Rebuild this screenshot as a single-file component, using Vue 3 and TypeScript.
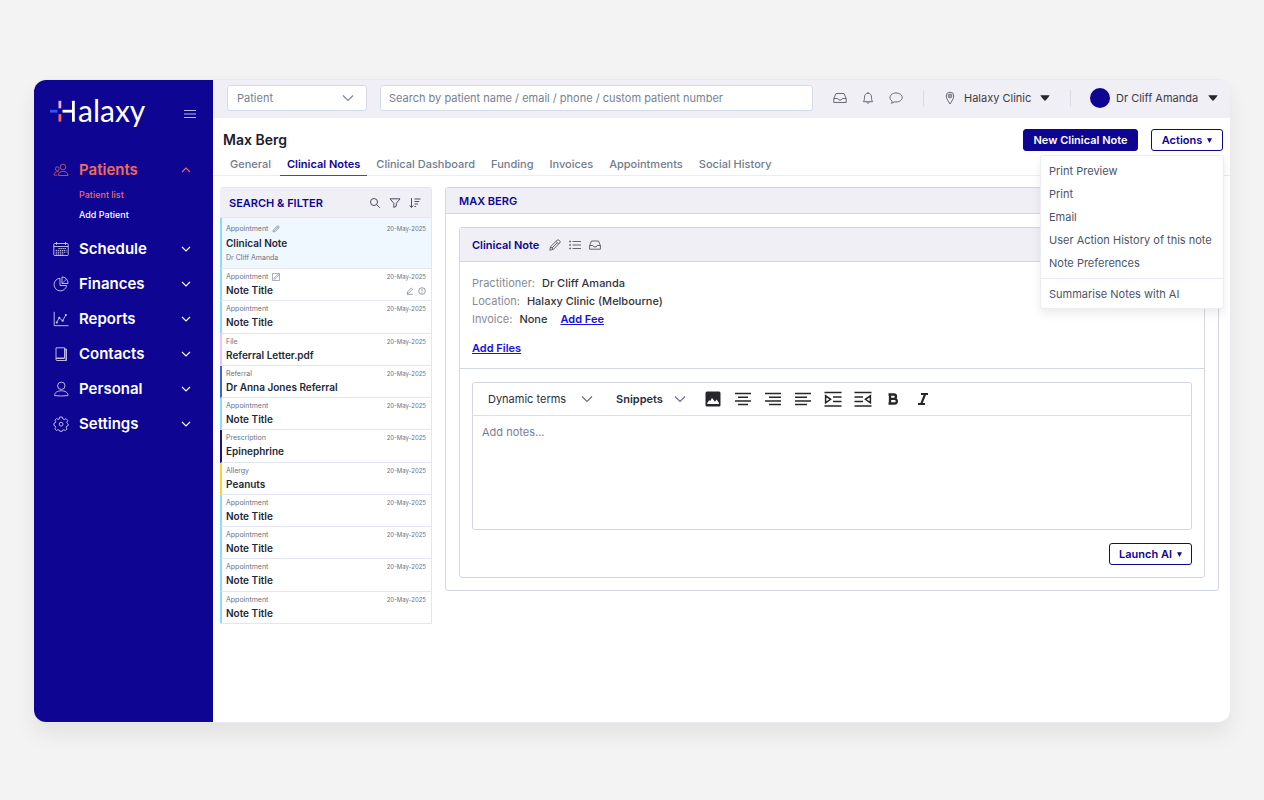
<script setup lang="ts">
import { ref } from 'vue'

interface NavItem { label: string; icon: string; open?: boolean }
interface Entry { kind: string; title: string; tone: string; author?: string; mark?: 'pencil' | 'edit'; flags?: boolean }

const nav: NavItem[] = [
  { label: 'Patients', icon: 'patients', open: true },
  { label: 'Schedule', icon: 'schedule' },
  { label: 'Finances', icon: 'finances' },
  { label: 'Reports', icon: 'reports' },
  { label: 'Contacts', icon: 'contacts' },
  { label: 'Personal', icon: 'personal' },
  { label: 'Settings', icon: 'settings' },
]

const tabs = ['General', 'Clinical Notes', 'Clinical Dashboard', 'Funding', 'Invoices', 'Appointments', 'Social History']
const activeTab = ref('Clinical Notes')

const entries: Entry[] = [
  { kind: 'Appointment', title: 'Clinical Note', tone: 'sky', author: 'Dr Cliff Amanda', mark: 'pencil' },
  { kind: 'Appointment', title: 'Note Title', tone: 'sky', mark: 'edit', flags: true },
  { kind: 'Appointment', title: 'Note Title', tone: 'sky' },
  { kind: 'File', title: 'Referral Letter.pdf', tone: 'pink' },
  { kind: 'Referral', title: 'Dr Anna Jones Referral', tone: 'blue' },
  { kind: 'Appointment', title: 'Note Title', tone: 'sky' },
  { kind: 'Prescription', title: 'Epinephrine', tone: 'navy' },
  { kind: 'Allergy', title: 'Peanuts', tone: 'yellow' },
  { kind: 'Appointment', title: 'Note Title', tone: 'sky' },
  { kind: 'Appointment', title: 'Note Title', tone: 'sky' },
  { kind: 'Appointment', title: 'Note Title', tone: 'sky' },
  { kind: 'Appointment', title: 'Note Title', tone: 'sky' },
]

const actions = ['Print Preview', 'Print', 'Email', 'User Action History of this note', 'Note Preferences']
const menuOpen = ref(true)
const notes = ref('')

const tools = [
  { name: 'Insert image', icon: 'image' },
  { name: 'Align centre', icon: 'M1 3.5H17M4 7.3H14M1 10.9H17M4 14.6H14' },
  { name: 'Align right', icon: 'M1 3.5H17M5 7.3H17M1 10.9H17M5 14.6H17' },
  { name: 'Align left', icon: 'M1 3.5H17M1 7.3H13M1 10.9H17M1 14.6H13' },
  { name: 'Increase indent', icon: 'M.5 2.5H17.5M9 7H17.5M9 11.5H17.5M.5 16H17.5M1.6 5.8V12.8L6.6 9.3Z' },
  { name: 'Decrease indent', icon: 'M.5 2.5H17.5M.5 7H9M.5 11.5H9M.5 16H17.5M16.4 5.8V12.8L11.4 9.3Z' },
  { name: 'Bold', icon: 'bold' },
  { name: 'Italic', icon: 'italic' },
]
</script>

<template>
  <div class="page">
    <div class="window">
      <aside class="sidebar">
        <div class="brand">
          <a class="logo" href="#" aria-label="Halaxy">
            <svg class="mark" width="28" height="23" viewBox="0 0 28 23">
              <rect x="8.5" y="1.8" width="2.8" height="7.5" fill="#e3b5f2" />
              <rect x="0" y="10.8" width="7.5" height="2.8" fill="#2e55ff" />
              <rect x="8.5" y="15.2" width="2.8" height="7.4" fill="#f06a5e" />
              <rect x="12.5" y="10.8" width="10" height="2.8" fill="#fff" />
              <rect x="22" y="1.8" width="2.8" height="21" rx=".5" fill="#fff" />
            </svg>
            <span class="word">alaxy</span>
          </a>
          <button class="burger" aria-label="Toggle menu">
            <svg width="12" height="10" viewBox="0 0 12 10"><path d="M0 1.5H12M0 5H12M0 8.5H12" stroke="#b9b6e4" stroke-width="1.1" /></svg>
          </button>
        </div>

        <nav class="nav">
          <template v-for="item in nav" :key="item.label">
            <button class="nav-item" :class="{ open: item.open }">
              <svg class="nav-icon" width="16" height="16" viewBox="0 0 16 16" fill="none" stroke="currentColor" stroke-width=".9">
                <template v-if="item.icon === 'patients'">
                  <circle cx="10" cy="5" r="2.8" /><path d="M5.5 13.5C5.5 10.8 7.3 9.4 10.1 9.4S15 10.8 15 13.5Z" />
                  <circle cx="4.3" cy="6.8" r="1.9" /><path d="M5.8 9.8C3 9.2 1 10.5 1 13.1H4.4" />
                </template>
                <template v-else-if="item.icon === 'schedule'">
                  <rect x=".8" y="2.5" width="14.4" height="12" rx=".8" /><path d="M.8 5.5H15.2M3.5 1V3.8M12.5 1V3.8" />
                  <path d="M5.5 7.5H13.5M2.7 9.4H13.5M2.7 11.2H13.5M2.7 13H11" stroke-width="1" stroke-dasharray="1.3 .7" />
                </template>
                <template v-else-if="item.icon === 'finances'">
                  <path d="M7 2.3A6.3 6.3 0 1 0 13.6 9.5H7Z" /><path d="M9 .9V7.5H15A6.2 6.2 0 0 0 9 .9Z" /><path d="M9 7.5L13.5 3.2" stroke-width=".7" />
                </template>
                <template v-else-if="item.icon === 'reports'">
                  <path d="M1.2 .8V14.7H15.5" /><path d="M3.7 11.5L6.2 6.8L9.6 9.8L12.8 4" /><path d="M3.7 11.5h.1M6.2 6.8h.1M9.6 9.8h.1M12.8 4h.1" stroke-width="2" stroke-linecap="round" />
                </template>
                <template v-else-if="item.icon === 'contacts'">
                  <path d="M3 1.8H11.5V12H3ZM3 12V13.5Q3 14.5 4 14.5H13.5V3H11.5M3 12.5H11.5" /><path d="M12.6 3V14.4" stroke-width=".6" />
                </template>
                <template v-else-if="item.icon === 'personal'">
                  <circle cx="8.3" cy="4.8" r="3.7" /><path d="M1.6 14.6C1.6 11.3 4.5 9.8 8.3 9.8S15 11.3 15 14.6Q8.3 15.4 1.6 14.6Z" />
                </template>
                <template v-else>
                  <path d="M6.7 1H9.3L9.8 2.9L11.3 3.6L13 2.6L14.8 4.5L13.8 6.1L14.3 7.3L15.2 8V9.5L13.9 10L13.2 11.5L14 13L12.3 14.5L10.9 13.8L9.5 14.2L9.2 15.3H6.8L6.3 14.1L4.9 13.7L3.4 14.5L1.9 12.8L2.7 11.5L2.2 10L.9 9.5V7.5L2.2 6.9L2.7 5.5L1.9 4.2L3.6 2.5L5 3.4L6.3 2.9Z" stroke-linejoin="round" />
                  <circle cx="8.1" cy="8.2" r="1.9" />
                </template>
              </svg>
              <span class="nav-label">{{ item.label }}</span>
              <svg width="10" height="8" viewBox="0 0 10 8" fill="none" stroke="currentColor" stroke-width="1.1">
                <path :d="item.open ? 'M1 6L5 2L9 6' : 'M1 2L5 6L9 2'" />
              </svg>
            </button>
            <div v-if="item.open" class="subnav">
              <a href="#" class="current">Patient list</a>
              <a href="#">Add Patient</a>
            </div>
          </template>
        </nav>
      </aside>

      <main class="main">
        <header class="topbar">
          <div class="select-box scope">
            <select aria-label="Search scope"><option>Patient</option></select>
            <svg width="12" height="8" viewBox="0 0 12 8" fill="none" stroke="#7c8799" stroke-width="1.2"><path d="M1 1.5L6 6.5L11 1.5" /></svg>
          </div>
          <input class="search" type="text" aria-label="Search patients" placeholder="Search by patient name / email / phone / custom patient number" />
          <div class="quick">
            <button aria-label="Inbox"><svg width="14" height="14" viewBox="0 0 14 14" fill="none" stroke="#5c5c66" stroke-width=".9"><path d="M.8 7.5L3 2.5H11L13.2 7.5V11.5H.8ZM.8 7.5H4.6L5.8 9H8.2L9.4 7.5H13.2" stroke-linejoin="round" /></svg></button>
            <button aria-label="Notifications"><svg width="14" height="14" viewBox="0 0 14 14" fill="none" stroke="#5c5c66" stroke-width=".9"><path d="M2.3 10.7C3.3 9.5 3.5 8.5 3.5 6C3.5 3.8 5 2.2 7 2.2S10.5 3.8 10.5 6C10.5 8.5 10.7 9.5 11.7 10.7ZM7 1V2.2M5.8 11.2Q7 14 8.2 11.2" stroke-linejoin="round" /></svg></button>
            <button aria-label="Messages"><svg width="14" height="14" viewBox="0 0 14 14" fill="none" stroke="#5c5c66" stroke-width=".9"><path d="M2.4 12.2C3.3 11.5 3.3 10.6 2.8 9.8C1.5 8.9 1 7.9 1 6.7C1 4 3.6 2 7 2S13.2 4 13.2 6.5S10.6 11 7 11C6.3 11 5.7 11 5.2 10.8C4.5 11.6 3.5 12 2.4 12.2Z" stroke-linejoin="round" /></svg></button>
          </div>
          <span class="rule"></span>
          <button class="picker clinic">
            <svg width="10" height="14" viewBox="0 0 10 14" fill="none" stroke="#5c5c66" stroke-width=".9"><path d="M5 13C3.5 10.5 1.2 7.5 1.2 5A3.8 3.8 0 0 1 8.8 5C8.8 7.5 6.5 10.5 5 13Z" /><circle cx="5" cy="5" r="1.9" /><circle cx="5" cy="5" r=".5" /></svg>
            <span>Halaxy Clinic</span>
            <svg class="caret" width="10" height="6" viewBox="0 0 10 6"><path d="M.3 .3H9.7Q9.3 1.5 5 6Q.7 1.5 .3 .3Z" fill="#26262b" /></svg>
          </button>
          <span class="rule"></span>
          <button class="picker user">
            <span class="avatar"></span>
            <span>Dr Cliff Amanda</span>
            <svg class="caret" width="10" height="6" viewBox="0 0 10 6"><path d="M.3 .3H9.7Q9.3 1.5 5 6Q.7 1.5 .3 .3Z" fill="#26262b" /></svg>
          </button>
        </header>

        <div class="heading">
          <h1>Max Berg</h1>
          <div class="heading-actions">
            <button class="btn solid">New Clinical Note</button>
            <div class="menu-anchor">
              <button class="btn outline" :aria-expanded="menuOpen" @click="menuOpen = !menuOpen">Actions
                <svg width="5" height="5" viewBox="0 0 5 5"><path d="M0 .3H5L2.5 4.9Z" fill="currentColor" /></svg>
              </button>
              <div v-if="menuOpen" class="menu">
                <button v-for="a in actions" :key="a">{{ a }}</button>
                <hr />
                <button>Summarise Notes with AI</button>
              </div>
            </div>
          </div>
        </div>

        <nav class="tabs">
          <a v-for="t in tabs" :key="t" href="#" :class="{ active: t === activeTab }" @click.prevent="activeTab = t">{{ t }}</a>
        </nav>

        <div class="content">
          <section class="list">
            <div class="list-head">
              <h2>SEARCH &amp; FILTER</h2>
              <button aria-label="Search"><svg width="12" height="12" viewBox="0 0 12 12" fill="none" stroke="#4a5162" stroke-width="1"><circle cx="5" cy="5" r="3.5" /><path d="M7.6 7.6L10.8 10.8" /></svg></button>
              <button aria-label="Filter"><svg width="12" height="12" viewBox="0 0 12 12" fill="none" stroke="#4a5162" stroke-width="1"><path d="M1 1.8H11L7.3 6.3V9.2L4.8 10.5V6.3Z" stroke-linejoin="round" /></svg></button>
              <button aria-label="Sort"><svg width="12" height="12" viewBox="0 0 12 12" fill="none" stroke="#4a5162" stroke-width="1"><path d="M2.5 1V10.5M.7 8.5L2.5 10.5L4.3 8.5M5.5 2H11.5M5.5 4.5H10.3M5.5 7H9M5.5 9.5H7" /></svg></button>
            </div>
            <ul>
              <li v-for="(e, i) in entries" :key="i" :class="[e.tone, { selected: i === 0 }]">
                <div class="line meta">
                  <span class="kind">{{ e.kind }}
                    <svg v-if="e.mark === 'pencil'" width="8" height="8" viewBox="0 0 8 8" fill="none" stroke="#8890a0" stroke-width=".8"><path d="M1 7L1.4 4.9L5 1.2Q6 .5 6.8 1.2T6.8 3L3.1 6.6ZM2 6L5.5 2.4M4.5 1.7L6.3 3.5" /></svg>
                    <svg v-if="e.mark === 'edit'" width="8" height="8" viewBox="0 0 8 8" fill="none" stroke="#8890a0" stroke-width=".7"><path d="M.5 .5H7.5V7.5H.5ZM1.8 6.2L2.2 4.7L6.7 .8L7.3 1.7L3.3 5.7Z" /></svg>
                  </span>
                  <time datetime="2025-05-20">20-May-2025</time>
                </div>
                <div class="line">
                  <strong>{{ e.title }}</strong>
                  <span v-if="e.flags" class="flags">
                    <svg width="8" height="8" viewBox="0 0 8 8" fill="none" stroke="#7d8595" stroke-width=".8"><path d="M1 6.5L1.5 4.8L5.3 1L6.6 2.2L2.8 6ZM1 7.3H7" /></svg>
                    <svg width="8" height="8" viewBox="0 0 8 8" fill="none" stroke="#7d8595" stroke-width=".8"><circle cx="4" cy="4" r="3.3" /><path d="M4 1.8V4.5M4 5.3V6.1" /></svg>
                  </span>
                </div>
                <div v-if="e.author" class="author">{{ e.author }}</div>
              </li>
            </ul>
          </section>

          <section class="record">
            <h2>MAX BERG</h2>
            <div class="record-body">
              <article class="note">
                <header class="note-head">
                  <h3>Clinical Note</h3>
                  <button aria-label="Edit"><svg width="12" height="12" viewBox="0 0 12 12" fill="none" stroke="#55555c" stroke-width=".9"><path d="M.8 11.2L1.6 7.7L8 1.3Q9.2 .4 10.5 1.5T10.7 4L4.3 10.4ZM7 2.3L9.7 5M1.6 7.7L4.3 10.4M2.9 9.1L8.4 3.6" stroke-linejoin="round" /></svg></button>
                  <button aria-label="List"><svg width="12" height="12" viewBox="0 0 12 12" fill="none" stroke="#55555c" stroke-width=".9"><path d="M3.5 2.5H12M3.5 6H12M3.5 9.5H12" /><path d="M.3 2.5H1.9M.3 6H1.9M.3 9.5H1.9" stroke-width="1.5" /></svg></button>
                  <button aria-label="Archive"><svg width="12" height="12" viewBox="0 0 12 12" fill="none" stroke="#55555c" stroke-width=".9"><path d="M.6 6.5L2.5 2H9.5L11.4 6.5V10.2H.6ZM.6 6.5H3.9L4.9 7.9H7.1L8.1 6.5H11.4" stroke-linejoin="round" /></svg></button>
                </header>
                <div class="details">
                  <p><span>Practitioner:</span><b>Dr Cliff Amanda</b></p>
                  <p><span>Location:</span><b>Halaxy Clinic (Melbourne)</b></p>
                  <p><span>Invoice:</span><b>None</b><a href="#" class="fee">Add Fee</a></p>
                  <a href="#" class="files">Add Files</a>
                </div>
                <div class="compose">
                  <div class="editor">
                    <div class="toolbar">
                      <div class="select-box terms">
                        <select aria-label="Dynamic terms"><option>Dynamic terms</option></select>
                        <svg width="12" height="8" viewBox="0 0 12 8" fill="none" stroke="#66728a" stroke-width="1.2"><path d="M1 1.5L6 6.5L11 1.5" /></svg>
                      </div>
                      <div class="select-box snippets">
                        <select aria-label="Snippets"><option>Snippets</option></select>
                        <svg width="12" height="8" viewBox="0 0 12 8" fill="none" stroke="#66728a" stroke-width="1.2"><path d="M1 1.5L6 6.5L11 1.5" /></svg>
                      </div>
                      <button v-for="t in tools" :key="t.name" class="tool" :aria-label="t.name">
                        <svg v-if="t.icon === 'image'" width="18" height="18" viewBox="0 0 18 18"><path fill="#26262b" fill-rule="evenodd" d="M3 1.5H15Q16.5 1.5 16.5 3V15Q16.5 16.5 15 16.5H3Q1.5 16.5 1.5 15V3Q1.5 1.5 3 1.5ZM3.3 14H14.9V12.7L12.6 9.5L11 11.8L8 8L6.2 11L5.2 10.2L3.3 12.8Z" /></svg>
                        <svg v-else-if="t.icon === 'bold'" width="18" height="18" viewBox="0 0 18 18" fill="none" stroke="#26262b" stroke-width="2.3"><path d="M4.5 4.5H9.8A2.1 2.1 0 0 1 9.8 8.8H6M9.8 8.8H10.5A2.3 2.3 0 0 1 10.5 13.5H4.5M6 4.5V13.5" /></svg>
                        <svg v-else-if="t.icon === 'italic'" width="18" height="18" viewBox="0 0 18 18" fill="none" stroke="#26262b" stroke-width="2.1"><path d="M7 4H14M4 14H11M11.2 4L7.2 14" /></svg>
                        <svg v-else width="18" height="18" viewBox="0 0 18 18" fill="none" stroke="#26262b" stroke-width="1.5"><path :d="t.icon" /></svg>
                      </button>
                    </div>
                    <textarea v-model="notes" aria-label="Notes" placeholder="Add notes..."></textarea>
                  </div>
                  <button class="btn outline launch">Launch AI
                    <svg width="5" height="5" viewBox="0 0 5 5"><path d="M0 .3H5L2.5 4.9Z" fill="currentColor" /></svg>
                  </button>
                </div>
              </article>
            </div>
          </section>
        </div>
      </main>
    </div>
  </div>
</template>

<style>
body { margin: 0; background: #f3f3f3; }
</style>

<style scoped>
.page, .page * { box-sizing: border-box; }
.page {
  min-height: 100vh;
  padding: 80px 34px 78px;
  display: flex;
  background: #f3f3f3;
  font-family: Inter, "Liberation Sans", sans-serif;
  font-size: 11px;
  line-height: 16px;
  color: #2b3040;
}
.page button, .page select, .page input, .page textarea { font: inherit; color: inherit; }
button { border: 0; padding: 0; background: none; cursor: pointer; }
svg { display: block; flex: none; }
h1, h2, h3, p, ul { margin: 0; padding: 0; }

.window {
  flex: 1;
  display: flex;
  min-width: 0;
  border-radius: 12px;
  overflow: hidden;
  background: #fff;
  box-shadow: 0 0 0 1px #ebebef, 0 12px 22px rgba(0, 0, 0, .07);
}

.sidebar { width: 179px; flex: none; background: #0e0593; color: #fff; }
.brand { display: flex; align-items: center; justify-content: space-between; padding: 16px 17px 0 16px; height: 52px; }
.logo { display: flex; align-items: baseline; padding-bottom: 8px; color: #fff; text-decoration: none; }
.word { font-family: Lato, sans-serif; font-size: 30px; line-height: 30px; }
.nav { padding-top: 20px; display: flex; flex-direction: column; }
.nav-item {
  display: flex;
  align-items: center;
  height: 35px;
  padding: 0 22px 0 19px;
  text-align: left;
}
.page .nav-item { font-size: 15px; font-weight: 600; }
.page .nav-item.open { color: #ef6a5f; }
.nav-icon { opacity: .8; }
.nav-label { flex: 1; margin-left: 10px; }
.subnav { display: flex; flex-direction: column; margin-top: -2px; padding: 0 0 6px 45px; font-size: 9px; font-weight: 500; }
.subnav a { color: #fff; text-decoration: none; line-height: 20px; }
.subnav .current { color: #ef6a5f; }

.main { flex: 1; min-width: 0; }
.topbar { display: flex; align-items: center; height: 38px; padding: 0 12px 2px 14px; background: #f0eff5; }
.select-box { position: relative; display: flex; align-items: center; }
.select-box select { appearance: none; width: 100%; border: 0; background: transparent; padding: 0; outline: 0; }
.select-box svg { position: absolute; right: 12px; pointer-events: none; }
.scope { width: 140px; height: 26px; background: #fff; border: 1px solid #d5dbe6; border-radius: 3px; padding-left: 9px; color: #76818f; }
.search { flex: 1; min-width: 0; height: 26px; margin-left: 13px; border: 1px solid #d5dbe6; border-radius: 3px; padding: 0 8px; background: #fff; outline: 0; }
.search::placeholder, textarea::placeholder { color: #76818f; opacity: 1; }
.quick { display: flex; gap: 14px; margin: 0 20px; }
.rule { width: 1px; height: 16px; background: #d9d9e2; }
.picker { display: flex; align-items: center; white-space: nowrap; }
.clinic { width: 104px; margin: 0 21px; gap: 9px; }
.user { width: 128px; margin-left: 19px; gap: 6px; }
.caret { margin-left: auto; }
.clinic .caret { margin-left: 0; }
.avatar { width: 20px; height: 20px; border-radius: 50%; background: #0e0593; }
.page .picker { color: #3c3c44; }

.heading { display: flex; justify-content: space-between; align-items: center; padding: 11px 7px 0 10px; }
.heading h1 { font-size: 14px; font-weight: 600; color: #1b2030; line-height: 22px; }
.heading-actions { display: flex; gap: 13px; }
.btn { display: flex; align-items: center; justify-content: center; gap: 5px; height: 22px; border-radius: 3px; border: 1px solid #0e0593; }
.page .btn { font-weight: 600; color: #0e0593; background: #fff; }
.page .btn.solid { background: #0e0593; color: #fff; width: 115px; }
.menu-anchor { position: relative; }
.menu-anchor .btn { width: 72px; }
.menu {
  position: absolute;
  z-index: 2;
  top: 26px;
  right: -1px;
  width: 184px;
  padding: 3px 0;
  display: flex;
  flex-direction: column;
  background: #fff;
  border: 1px solid #ececf2;
  border-radius: 3px;
  box-shadow: 0 5px 10px rgba(0, 0, 0, .08);
}
.menu button { height: 23px; padding: 0 8px; text-align: left; white-space: nowrap; }
.page .menu button { color: #4b5468; }
.menu hr { width: 100%; border: 0; border-top: 1px solid #e8eaf2; margin: 4px 0 3px; }

.tabs { display: flex; border-bottom: 1px solid #e9eef4; padding: 0 10px; }
.tabs a { height: 25px; line-height: 26px; padding: 0 7px; margin-right: 2px; color: #727c8e; font-weight: 500; text-decoration: none; border-bottom: 1px solid transparent; margin-bottom: -1px; white-space: nowrap; }
.tabs a.active { color: #0e0593; font-weight: 600; border-color: #4b42b5; }

.content { display: flex; align-items: flex-start; gap: 13px; padding: 11px 11px 20px 7px; }
.list { width: 212px; flex: none; min-height: 437px; display: flex; flex-direction: column; border: 1px solid #e4e6ee; border-left: 0; border-radius: 3px 3px 0 0; }
.list-head { display: flex; align-items: center; gap: 8px; height: 30px; padding: 0 10px 0 9px; background: #f0eff5; border-bottom: 1px solid #e4e6ee; }
.list-head h2 { flex: 1; }
h2 { font-size: 11px; font-weight: 600; color: #0e0593; }
ul { flex: 1; display: flex; flex-direction: column; list-style: none; }
li { flex: 1; border-left: 2px solid #93d8f7; border-bottom: 1px solid #e4e6ee; padding: 2px 5px 0 4px; display: flex; flex-direction: column; }
li.selected { flex: none; height: 51px; background: #f0f8ff; padding-top: 5px; }
li:last-child { border-bottom: 0; }
li.pink { border-left-color: #ecc4f5; }
li.blue { border-left-color: #3c5cf5; }
li.navy { border-left-color: #1c128c; }
li.yellow { border-left-color: #fbcf3b; }
.line { display: flex; justify-content: space-between; align-items: center; }
.meta, .author { font-size: 7px; line-height: 12px; color: #697283; }
.meta time { font-size: 6px; }
.kind { display: flex; gap: 4px; align-items: center; }
.line strong { font-size: 10px; font-weight: 600; line-height: 15px; color: #232838; }
.selected .line strong { line-height: 17px; }
.flags { display: flex; gap: 4px; }

.record { flex: 1; min-width: 0; border: 1px solid #d3d7e2; border-radius: 3px; background: #fff; }
.record > h2 { height: 26px; line-height: 26px; padding-left: 13px; background: #f0eff5; border-bottom: 1px solid #d3d7e2; }
.record-body { padding: 13px 13px 12px; }
.note { border: 1px solid #d3d7e2; border-radius: 3px; }
.note-head { display: flex; align-items: center; gap: 8px; height: 34px; padding: 0 12px; background: #f0eff5; border-bottom: 1px solid #d3d7e2; }
.note-head h3 { font-size: 11px; font-weight: 600; color: #0e0593; margin-right: 2px; }
.details { padding: 12px; border-bottom: 1px solid #d3d7e2; }
.details p { display: flex; gap: 7px; line-height: 18px; }
.details p span { color: #868b98; }
.details b { font-weight: 500; color: #33333a; }
.details a { color: #1a10e0; font-weight: 600; }
.details .fee { margin-left: 6px; }
.files { display: inline-block; margin-top: 12px; }
.compose { padding: 13px 12px 12px; display: flex; flex-direction: column; gap: 13px; }
.editor { border: 1px solid #d3d7e2; border-radius: 3px; }
.toolbar { display: flex; align-items: center; height: 33px; padding-left: 15px; border-bottom: 1px solid #dcdfe8; }
.terms { width: 128px; }
.snippets { width: 82px; font-weight: 600; }
.toolbar .terms svg { right: 23px; }
.toolbar .snippets svg { right: 12px; }
.tool { width: 30px; height: 30px; display: grid; place-items: center; }
textarea { display: block; width: 100%; height: 113px; border: 0; outline: 0; resize: none; padding: 8px 9px; background: transparent; }
.launch { align-self: flex-end; width: 83px; }
</style>
